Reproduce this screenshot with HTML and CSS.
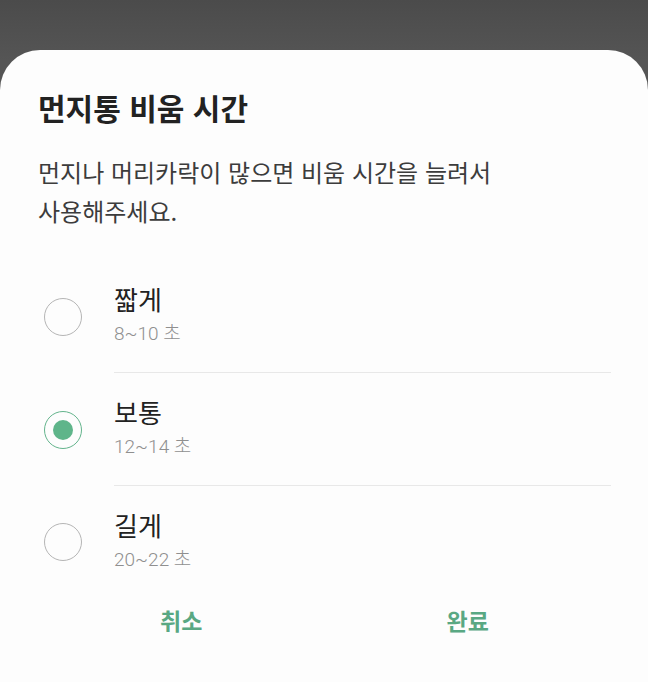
FILE: index.html
```html
<!DOCTYPE html>
<html lang="ko">
<head>
    <meta charset="UTF-8">
    <meta name="viewport" content="width=device-width, initial-scale=1.0">
    <title>먼지통 비움 시간</title>
    <link rel="stylesheet" href="styles.css">
</head>
<body>
    <div class="dialog">
        <h2 class="dialog-title">먼지통 비움 시간</h2>
        <p class="dialog-desc">먼지나 머리카락이 많으면 비움 시간을 늘려서<br>사용해주세요.</p>

        <div class="options">
            <label class="option">
                <span class="radio"></span>
                <span class="option-text">
                    <span class="option-label">짧게</span>
                    <span class="option-sub">8~10 초</span>
                </span>
            </label>
            <label class="option">
                <span class="radio checked"></span>
                <span class="option-text">
                    <span class="option-label">보통</span>
                    <span class="option-sub">12~14 초</span>
                </span>
            </label>
            <label class="option last">
                <span class="radio"></span>
                <span class="option-text">
                    <span class="option-label">길게</span>
                    <span class="option-sub">20~22 초</span>
                </span>
            </label>
        </div>

        <div class="buttons">
            <button class="btn">취소</button>
            <button class="btn">완료</button>
        </div>
    </div>
</body>
</html>
```

FILE: styles.css
```css
body {
    margin: 0;
    padding: 0;
    height: 100vh;
    overflow: hidden;
    font-family: "Noto Sans CJK KR", "Noto Sans", sans-serif;
    background: linear-gradient(#4b4b4b, #555555 60px);
}

.dialog {
    margin-top: 50px;
    height: calc(100vh - 50px);
    box-sizing: border-box;
    background: #fdfdfd;
    border-radius: 40px 40px 0 0;
    padding: 38px 37px 0 38px;
}

.dialog-title {
    margin: 0;
    font-size: 30px;
    line-height: 38px;
    font-weight: bold;
    color: #222222;
}

.dialog-desc {
    margin: 26px 0 0 0;
    font-size: 24px;
    line-height: 39px;
    color: #3c3c3c;
}

.options {
    margin-top: 30px;
}

.option {
    display: flex;
    align-items: center;
}

.radio {
    flex: none;
    width: 36px;
    height: 36px;
    margin-left: 6px;
    margin-right: 32px;
    border: 1px solid #b5b5b5;
    border-radius: 50%;
    display: flex;
    justify-content: center;
    align-items: center;
}

.radio.checked {
    border-color: #63b48c;
}

.radio.checked::after {
    content: "";
    width: 20px;
    height: 20px;
    border-radius: 50%;
    background: #5fb58a;
}

.option-text {
    flex: 1;
    display: flex;
    flex-direction: column;
    padding: 23px 0 25px 0;
    border-bottom: 1.5px solid #e8e8e8;
}

.option.last .option-text {
    border-bottom: none;
}

.option-label {
    font-size: 26px;
    line-height: 32px;
    color: #222222;
}

.option-sub {
    margin-top: 6px;
    font-family: Roboto, "Noto Sans CJK KR", sans-serif;
    font-size: 19px;
    font-weight: 300;
    line-height: 26px;
    color: #8f8f8f;
}

.buttons {
    display: flex;
}

.btn {
    flex: 1;
    height: 44px;
    background: none;
    border: none;
    font-family: inherit;
    font-size: 23px;
    font-weight: bold;
    color: #59a883;
    padding: 0;
}
```
